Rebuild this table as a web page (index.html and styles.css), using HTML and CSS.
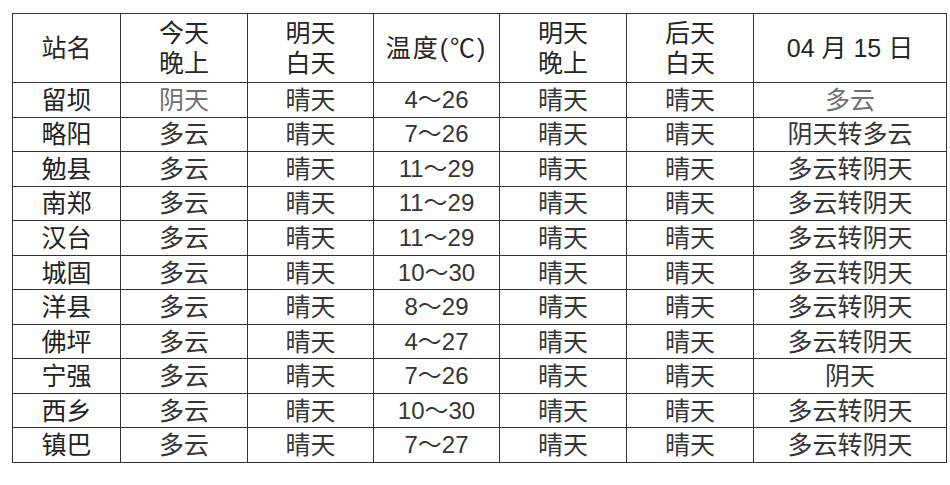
FILE: index.html
```html
<!DOCTYPE html>
<html lang="zh-CN">
<head>
<meta charset="utf-8">
<link rel="stylesheet" href="styles.css">
</head>
<body>
<table class="wx">
<colgroup>
<col class="c1"><col class="c2"><col class="c3"><col class="c4"><col class="c5"><col class="c6"><col class="c7">
</colgroup>
<thead>
<tr class="head">
<th>站名</th>
<th>今天<br>晚上</th>
<th>明天<br>白天</th>
<th class="temp">温度(℃)</th>
<th>明天<br>晚上</th>
<th>后天<br>白天</th>
<th>04 月 15 日</th>
</tr>
</thead>
<tbody>
<tr><td class="st">留坝</td><td class="lt">阴天</td><td>晴天</td><td class="num">4～26</td><td>晴天</td><td>晴天</td><td class="lt">多云</td></tr>
<tr><td class="st">略阳</td><td>多云</td><td>晴天</td><td class="num">7～26</td><td>晴天</td><td>晴天</td><td>阴天转多云</td></tr>
<tr><td class="st">勉县</td><td>多云</td><td>晴天</td><td class="num">11～29</td><td>晴天</td><td>晴天</td><td>多云转阴天</td></tr>
<tr><td class="st">南郑</td><td>多云</td><td>晴天</td><td class="num">11～29</td><td>晴天</td><td>晴天</td><td>多云转阴天</td></tr>
<tr><td class="st">汉台</td><td>多云</td><td>晴天</td><td class="num">11～29</td><td>晴天</td><td>晴天</td><td>多云转阴天</td></tr>
<tr><td class="st">城固</td><td>多云</td><td>晴天</td><td class="num">10～30</td><td>晴天</td><td>晴天</td><td>多云转阴天</td></tr>
<tr><td class="st">洋县</td><td>多云</td><td>晴天</td><td class="num">8～29</td><td>晴天</td><td>晴天</td><td>多云转阴天</td></tr>
<tr><td class="st">佛坪</td><td>多云</td><td>晴天</td><td class="num">4～27</td><td>晴天</td><td>晴天</td><td>多云转阴天</td></tr>
<tr><td class="st">宁强</td><td>多云</td><td>晴天</td><td class="num">7～26</td><td>晴天</td><td>晴天</td><td>阴天</td></tr>
<tr><td class="st">西乡</td><td>多云</td><td>晴天</td><td class="num">10～30</td><td>晴天</td><td>晴天</td><td>多云转阴天</td></tr>
<tr><td class="st">镇巴</td><td>多云</td><td>晴天</td><td class="num">7～27</td><td>晴天</td><td>晴天</td><td>多云转阴天</td></tr>
</tbody>
</table>
</body>
</html>
```
FILE: styles.css
```css
html, body {
  margin: 0;
  padding: 0;
  background: #ffffff;
}
body {
  padding: 13px 0 0 12px;
  font-family: "Liberation Sans", "Noto Sans CJK SC", sans-serif;
}
.wx {
  border-collapse: collapse;
  table-layout: fixed;
  width: 934px;
  color: #353535;
  font-size: 25px;
}
.c1 { width: 108px; }
.c2 { width: 127px; }
.c3 { width: 126px; }
.c4 { width: 126px; }
.c5 { width: 127px; }
.c6 { width: 127px; }
.c7 { width: 193px; }
.wx th, .wx td {
  border: 1px solid #333333;
  padding: 0;
  text-align: center;
  vertical-align: middle;
  line-height: 30px;
}
.wx th {
  font-weight: normal;
  color: #262626;
}
.wx th.temp { letter-spacing: 2px; }
.head { height: 69px; }
.wx tbody tr { height: 34.55px; }
.wx td.st { color: #222222; }
.wx td.lt { color: #707070; }
.wx td.num { font-size: 24px; }
```
